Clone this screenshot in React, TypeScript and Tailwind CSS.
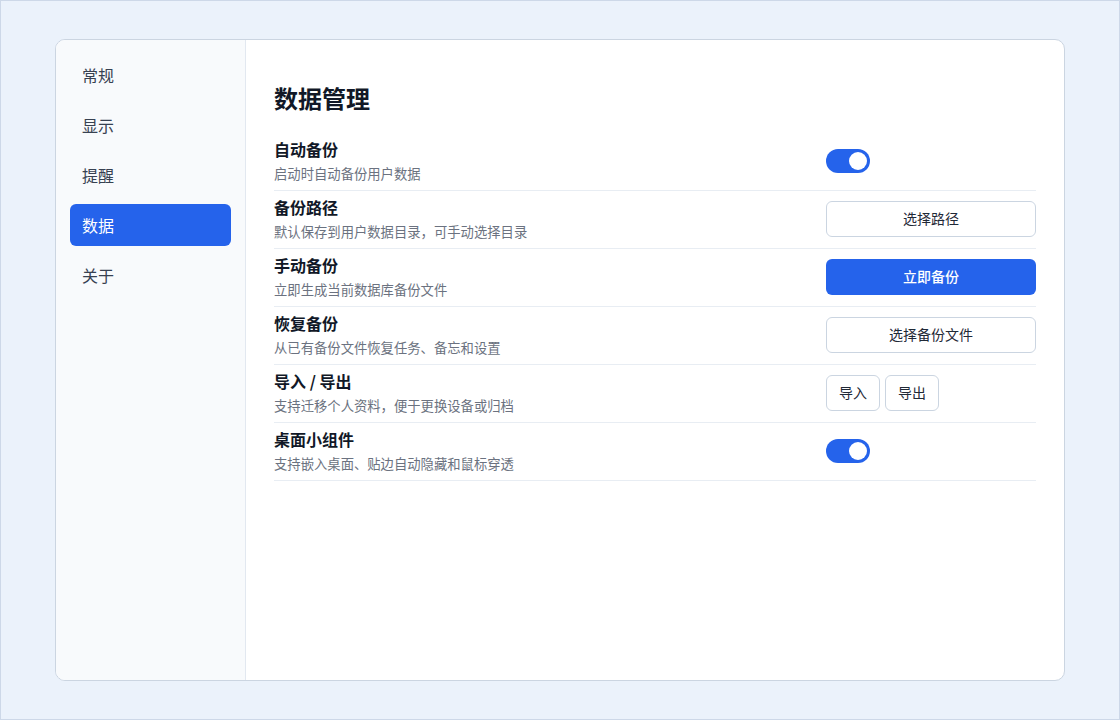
import React, { useState } from 'react';

const font = { fontFamily: '"Noto Sans CJK SC", "Noto Sans", sans-serif' };

const navItems = ['常规', '显示', '提醒', '数据', '关于'];

const Toggle: React.FC<{ on: boolean; onChange: () => void }> = ({ on, onChange }) => (
  <button
    onClick={onChange}
    className={`relative w-[44px] h-[24px] rounded-full transition-colors ${on ? 'bg-[#2563eb]' : 'bg-[#cbd5e1]'}`}
  >
    <span
      className={`absolute top-[3px] w-[18px] h-[18px] rounded-full bg-white transition-all ${on ? 'left-[23px]' : 'left-[3px]'}`}
    />
  </button>
);

const Row: React.FC<{ title: string; desc: string; children: React.ReactNode }> = ({ title, desc, children }) => (
  <div className="flex items-center border-b border-[#e8edf3] pt-[5px] pb-[7px]">
    <div className="flex-1">
      <div className="text-[16px] leading-[22px] font-bold text-[#111827]">{title}</div>
      <div className="mt-[5px] text-[13.33px] leading-[18px] text-[#6b7280]">{desc}</div>
    </div>
    <div className="w-[210px] flex items-center">{children}</div>
  </div>
);

const App: React.FC = () => {
  const [active, setActive] = useState('数据');
  const [autoBackup, setAutoBackup] = useState(true);
  const [widget, setWidget] = useState(true);

  return (
    <div style={font} className="w-[1120px] h-[720px] bg-[#ebf2fb] border border-[#cdd8e8] flex items-center justify-center">
      <div className="w-[1010px] h-[642px] bg-white border border-[#cbd5e1] rounded-[10px] flex overflow-hidden">
        {/* Sidebar */}
        <div className="w-[190px] bg-[#f8fafc] border-r border-[#e2e8f0] px-[14px] pt-[14px] flex flex-col gap-[8px]">
          {navItems.map((item) => (
            <button
              key={item}
              onClick={() => setActive(item)}
              className={`h-[42px] px-[12px] rounded-[6px] text-left text-[16px] ${
                active === item ? 'bg-[#2563eb] text-white' : 'text-[#374151]'
              }`}
            >
              {item}
            </button>
          ))}
        </div>
        {/* Content */}
        <div className="flex-1 px-[28px] pt-[42px]">
          <h2 className="text-[24px] leading-[32px] font-bold text-[#111827] mb-[19px]">数据管理</h2>
          <Row title="自动备份" desc="启动时自动备份用户数据">
            <Toggle on={autoBackup} onChange={() => setAutoBackup(!autoBackup)} />
          </Row>
          <Row title="备份路径" desc="默认保存到用户数据目录，可手动选择目录">
            <button className="w-full h-[36px] rounded-[6px] border border-[#cbd5e1] bg-white text-[14px] text-[#1f2937]">
              选择路径
            </button>
          </Row>
          <Row title="手动备份" desc="立即生成当前数据库备份文件">
            <button className="w-full h-[36px] rounded-[6px] bg-[#2563eb] text-[14px] font-medium text-white">
              立即备份
            </button>
          </Row>
          <Row title="恢复备份" desc="从已有备份文件恢复任务、备忘和设置">
            <button className="w-full h-[36px] rounded-[6px] border border-[#cbd5e1] bg-white text-[14px] text-[#1f2937]">
              选择备份文件
            </button>
          </Row>
          <Row title="导入 / 导出" desc="支持迁移个人资料，便于更换设备或归档">
            <div className="flex gap-[5px]">
              <button className="w-[54px] h-[36px] rounded-[6px] border border-[#cbd5e1] bg-white text-[14px] text-[#1f2937]">
                导入
              </button>
              <button className="w-[54px] h-[36px] rounded-[6px] border border-[#cbd5e1] bg-white text-[14px] text-[#1f2937]">
                导出
              </button>
            </div>
          </Row>
          <Row title="桌面小组件" desc="支持嵌入桌面、贴边自动隐藏和鼠标穿透">
            <Toggle on={widget} onChange={() => setWidget(!widget)} />
          </Row>
        </div>
      </div>
    </div>
  );
};

export default App;
